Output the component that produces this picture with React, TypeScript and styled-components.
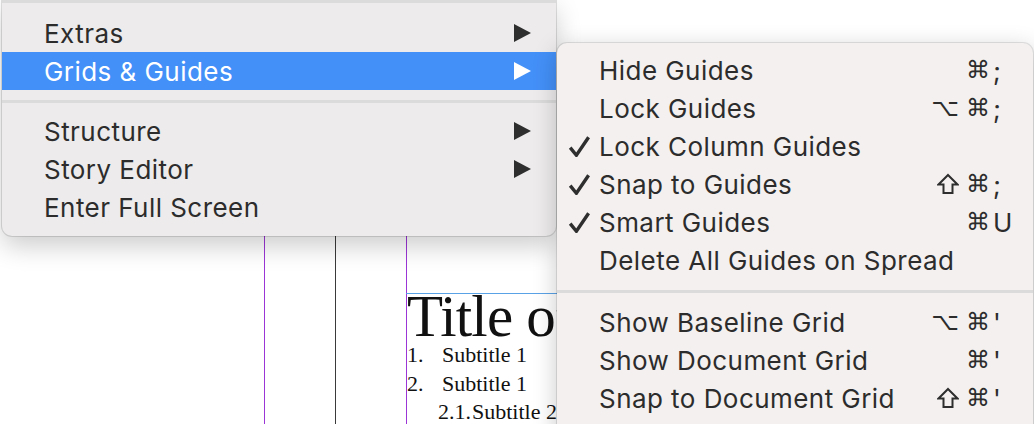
import React from "react";
import styled, { createGlobalStyle } from "styled-components";

const Global = createGlobalStyle`
  html, body { margin: 0; padding: 0; background: #ffffff; }
  body { width: 1034px; height: 424px; overflow: hidden; }
`;

const Page = styled.div`
  position: relative;
  width: 1034px;
  height: 424px;
  overflow: hidden;
  background: #ffffff;
  font-family: Inter, "Noto Sans", sans-serif;
`;

/* ---------- document canvas ---------- */

const Guide = styled.div<{ $x: number; $color: string }>`
  position: absolute;
  top: 0;
  bottom: 0;
  left: ${(p) => p.$x}px;
  width: 1px;
  background: ${(p) => p.$color};
`;

const TextFrame = styled.div`
  position: absolute;
  left: 406px;
  top: 293px;
  width: 151px;
  height: 131px;
  overflow: hidden;
  border-top: 1px solid #5aa2e6;
  font-family: "Liberation Serif", "Times New Roman", serif;
  color: #111;
  padding-left: 1px;
`;

const Title = styled.div`
  font-size: 59px;
  line-height: 44px;
  height: 44px;
  white-space: nowrap;
  letter-spacing: -0.8px;
`;

const ListBlock = styled.div`
  margin-top: 3px;
  display: flex;
  flex-direction: column;
`;

const ListLine = styled.div<{ $indent: number }>`
  display: flex;
  font-size: 22px;
  line-height: 28.5px;
  height: 28.5px;
  padding-left: ${(p) => p.$indent}px;
  white-space: nowrap;
`;

const ListNum = styled.span<{ $w: number }>`
  display: inline-block;
  width: ${(p) => p.$w}px;
  flex: none;
`;

/* ---------- menus ---------- */

const MainMenu = styled.div`
  position: absolute;
  left: 2px;
  top: 0;
  width: 554px;
  padding-bottom: 10px;
  background: #edebeb;
  border-radius: 0 0 10px 10px;
  box-shadow: 0 10px 26px rgba(0, 0, 0, 0.2), 0 0 0 1px rgba(0, 0, 0, 0.12);
  display: flex;
  flex-direction: column;
  z-index: 2;
`;

const SubMenu = styled.div`
  position: absolute;
  left: 557px;
  top: 43px;
  width: 476px;
  height: 420px;
  padding-top: 8px;
  box-sizing: border-box;
  background: #f3f0ef;
  border-radius: 10px 10px 0 0;
  box-shadow: 0 6px 24px rgba(0, 0, 0, 0.22), 0 0 0 1px rgba(0, 0, 0, 0.1);
  display: flex;
  flex-direction: column;
  z-index: 3;
`;

const Separator = styled.div<{ $h: number; $lineTop: number }>`
  position: relative;
  height: ${(p) => p.$h}px;
  flex: none;
  &::after {
    content: "";
    position: absolute;
    left: 0;
    right: 0;
    top: ${(p) => p.$lineTop}px;
    height: 3px;
    background: #dcdbdb;
  }
`;

const MenuRow = styled.div<{ $active?: boolean }>`
  display: flex;
  align-items: center;
  height: 38px;
  flex: none;
  padding: 0 25px 0 42px;
  background: ${(p) => (p.$active ? "#4390f8" : "transparent")};
  color: ${(p) => (p.$active ? "#ffffff" : "#2c2c2c")};
  font-size: 26px;
  letter-spacing: 0.45px;
`;

const Label = styled.span`
  flex: 1;
  white-space: nowrap;
`;

const Arrow = styled.span<{ $active?: boolean }>`
  width: 0;
  height: 0;
  border-top: 9px solid transparent;
  border-bottom: 9px solid transparent;
  border-left: 17px solid ${(p) => (p.$active ? "#ffffff" : "#2e2e2e")};
`;

const SubRow = styled.div`
  display: grid;
  grid-template-columns: 42px 1fr auto 26px;
  align-items: center;
  height: 38px;
  flex: none;
  padding-right: 15px;
  color: #2c2c2c;
  font-size: 26px;
  letter-spacing: 0.45px;
`;

const CheckCell = styled.span`
  display: flex;
  align-items: center;
  padding-left: 11px;
`;

const Mods = styled.span`
  display: flex;
  align-items: center;
  justify-content: flex-end;
  gap: 7px;
  font-family: "DejaVu Sans", sans-serif;
  font-size: 24px;
  letter-spacing: 0;
  padding-right: 2px;
`;

const Key = styled.span`
  font-family: Inter, "DejaVu Sans", sans-serif;
  font-size: 26px;
  letter-spacing: 0;
  padding-left: 1px;
`;

const Check = () => (
  <svg width="22" height="22" viewBox="0 0 22 22">
    <path
      d="M2.2 12.6 L8.4 20.2 L20.6 2.2"
      fill="none"
      stroke="#2e2e2e"
      strokeWidth="3.4"
      strokeLinejoin="miter"
    />
  </svg>
);

const ShiftIcon = () => (
  <svg width="22" height="22" viewBox="0 0 22 22">
    <path
      d="M11 2 L20.5 11.5 L15.5 11.5 L15.5 20 L6.5 20 L6.5 11.5 L1.5 11.5 Z"
      fill="none"
      stroke="#2e2e2e"
      strokeWidth="2"
      strokeLinejoin="miter"
    />
  </svg>
);

type SubItem =
  | { kind: "item"; label: string; checked?: boolean; mods?: string[]; key?: string }
  | { kind: "sep" };

const subItems: SubItem[] = [
  { kind: "item", label: "Hide Guides", mods: ["⌘"], key: ";" },
  { kind: "item", label: "Lock Guides", mods: ["⌥", "⌘"], key: ";" },
  { kind: "item", label: "Lock Column Guides", checked: true },
  { kind: "item", label: "Snap to Guides", checked: true, mods: ["⇧", "⌘"], key: ";" },
  { kind: "item", label: "Smart Guides", checked: true, mods: ["⌘"], key: "U" },
  { kind: "item", label: "Delete All Guides on Spread" },
  { kind: "sep" },
  { kind: "item", label: "Show Baseline Grid", mods: ["⌥", "⌘"], key: "'" },
  { kind: "item", label: "Show Document Grid", mods: ["⌘"], key: "'" },
  { kind: "item", label: "Snap to Document Grid", mods: ["⇧", "⌘"], key: "'" },
];

export default function App() {
  return (
    <Page>
      <Global />
      <Guide $x={264} $color="#9b35d6" />
      <Guide $x={335} $color="#3a3a3a" />
      <Guide $x={406} $color="#9b35d6" />
      <TextFrame>
        <Title>Title of Document</Title>
        <ListBlock>
          <ListLine $indent={0}>
            <ListNum $w={35}>1.</ListNum>Subtitle 1
          </ListLine>
          <ListLine $indent={0}>
            <ListNum $w={35}>2.</ListNum>Subtitle 1
          </ListLine>
          <ListLine $indent={31}>
            <ListNum $w={34}>2.1.</ListNum>Subtitle 2
          </ListLine>
        </ListBlock>
      </TextFrame>

      <MainMenu>
        <Separator $h={14} $lineTop={0} />
        <MenuRow>
          <Label>Extras</Label>
          <Arrow />
        </MenuRow>
        <MenuRow $active>
          <Label>Grids &amp; Guides</Label>
          <Arrow $active />
        </MenuRow>
        <Separator $h={22} $lineTop={10} />
        <MenuRow>
          <Label>Structure</Label>
          <Arrow />
        </MenuRow>
        <MenuRow>
          <Label>Story Editor</Label>
          <Arrow />
        </MenuRow>
        <MenuRow>
          <Label>Enter Full Screen</Label>
        </MenuRow>
      </MainMenu>

      <SubMenu>
        {subItems.map((it, i) =>
          it.kind === "sep" ? (
            <Separator key={i} $h={24} $lineTop={11} />
          ) : (
            <SubRow key={i}>
              <CheckCell>{it.checked ? <Check /> : null}</CheckCell>
              <Label>{it.label}</Label>
              <Mods>
                {(it.mods || []).map((m, j) =>
                  m === "⇧" ? <ShiftIcon key={j} /> : <span key={j}>{m}</span>
                )}
              </Mods>
              <Key>{it.key || ""}</Key>
            </SubRow>
          )
        )}
      </SubMenu>
    </Page>
  );
}
